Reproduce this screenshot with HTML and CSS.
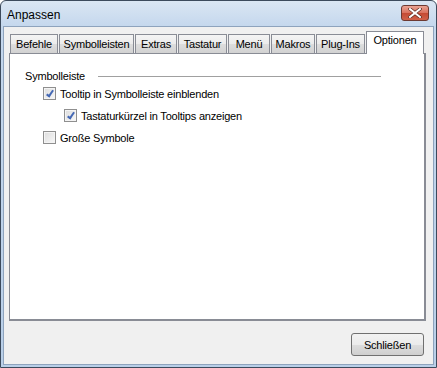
FILE: index.html
```html
<!DOCTYPE html>
<html lang="de">
<head>
    <meta charset="UTF-8">
    <title>Anpassen</title>
    <link rel="stylesheet" href="styles.css">
</head>
<body>

    <!-- Dialog window -->
    <div class="window">
        <div class="title-bar">
            <span class="title">Anpassen</span>
            <button class="close-button" aria-label="Schließen">
                <svg width="14" height="10" viewBox="0 0 14 10">
                    <path d="M2 1 L12 9 M12 1 L2 9" stroke="#5a2a20" stroke-width="3.4" stroke-linecap="square"/>
                    <path d="M2 1 L12 9 M12 1 L2 9" stroke="#ffffff" stroke-width="2" stroke-linecap="square"/>
                </svg>
            </button>
        </div>

        <div class="client">
            <!-- Tabs -->
            <div class="tabs">
                <div class="tab tab-befehle">Befehle</div>
                <div class="tab tab-symbolleisten">Symbolleisten</div>
                <div class="tab tab-extras">Extras</div>
                <div class="tab tab-tastatur">Tastatur</div>
                <div class="tab tab-menu">Menü</div>
                <div class="tab tab-makros">Makros</div>
                <div class="tab tab-plugins">Plug-Ins</div>
                <div class="tab tab-optionen active">Optionen</div>
            </div>

            <div class="tab-panel">
                <div class="group-title">
                    <span>Symbolleiste</span>
                    <div class="group-line"></div>
                </div>

                <label class="check-row first">
                    <span class="checkbox checked"></span>
                    Tooltip in Symbolleiste einblenden
                </label>
                <label class="check-row indent">
                    <span class="checkbox checked"></span>
                    Tastaturkürzel in Tooltips anzeigen
                </label>
                <label class="check-row">
                    <span class="checkbox"></span>
                    Große Symbole
                </label>
            </div>

            <div class="button-bar">
                <button class="push-button">Schließen</button>
            </div>
        </div>
    </div>

</body>
</html>
```

FILE: styles.css
```css
body {
    margin: 0;
    font-family: "Liberation Sans", Arial, sans-serif;
    font-size: 11px;
    letter-spacing: -0.2px;
    color: #000;
    background: #ffffff;
}

.window {
    width: 437px;
    height: 368px;
    box-sizing: border-box;
    border: 1px solid #3c4a5c;
    border-radius: 6px 6px 0 0;
    background: linear-gradient(#dae6f3, #c4d7ed 26px, #b9cfe8);
    display: flex;
    flex-direction: column;
    overflow: hidden;
}

.title-bar {
    height: 25px;
    display: flex;
    align-items: flex-start;
    justify-content: space-between;
    padding: 0 7px 0 6px;
    flex-shrink: 0;
}

.title {
    margin-top: 7px;
    font-size: 12px;
    letter-spacing: 0;
    color: #000;
}

.close-button {
    margin-top: 4px;
    width: 28px;
    height: 16px;
    padding: 0;
    border: 1px solid #6d3a32;
    border-radius: 3px;
    background: linear-gradient(#e9a394, #d9705c 50%, #c44a33 51%, #d0624a);
    display: flex;
    align-items: center;
    justify-content: center;
}

.client {
    flex: 1;
    margin: 0 2px 2px 2px;
    border: 1px solid #8ea3bd;
    background: #f0f0f0;
    display: flex;
    flex-direction: column;
    padding: 0 7px 0 5px;
}

/* Tabs row */
.tabs {
    display: flex;
    align-items: flex-end;
    height: 26px;
    padding-left: 1px;
    gap: 1px;
}

.tab {
    height: 19px;
    box-sizing: border-box;
    padding-top: 3px;
    border: 1px solid #898c95;
    border-bottom: none;
    background: linear-gradient(#f4f4f4, #ebebeb 50%, #dddddd 51%, #d2d2d2);
    text-align: center;
    line-height: 13px;
    flex-shrink: 0;
}

.tab-befehle { width: 48px; }
.tab-symbolleisten { width: 75px; }
.tab-extras { width: 42px; }
.tab-tastatur { width: 49px; }
.tab-menu { width: 42px; }
.tab-makros { width: 44px; }
.tab-plugins { width: 49px; }
.tab-optionen { width: 58px; }

.tab.active {
    height: 23px;
    margin-bottom: -1px;
    background: #ffffff;
    padding-top: 2px;
    position: relative;
}

/* Panel */
.tab-panel {
    height: 268px;
    box-sizing: border-box;
    background: #ffffff;
    border: 1px solid #898c95;
    border-right: 2px solid #898c95;
    border-bottom: 2px solid #898c95;
    padding: 15px 43px 0 15px;
}

.group-title {
    display: flex;
    align-items: center;
    gap: 13px;
    height: 14px;
}

.group-line {
    flex: 1;
    height: 0;
    border-top: 1px solid #a0a0a0;
}

.check-row {
    display: flex;
    align-items: center;
    gap: 4px;
    height: 13px;
    margin-top: 9px;
    margin-left: 18px;
}

.check-row.first {
    margin-top: 4px;
}

.check-row.indent {
    margin-left: 39px;
}

.checkbox {
    width: 11px;
    height: 11px;
    border: 1px solid #8f8f8f;
    background: linear-gradient(135deg, #dcdcdc, #f8f8f8);
    box-shadow: inset 0 0 0 1px #f4f4f4;
    position: relative;
    flex-shrink: 0;
}

.checkbox.checked::after {
    content: "";
    position: absolute;
    left: 4px;
    top: 1px;
    width: 2px;
    height: 6px;
    border-right: 2px solid #4468b4;
    border-bottom: 2px solid #4468b4;
    transform: rotate(35deg);
}

/* Bottom buttons */
.button-bar {
    flex: 1;
    display: flex;
    justify-content: flex-end;
    align-items: flex-start;
    padding-top: 12px;
}

.push-button {
    width: 73px;
    height: 23px;
    border: 1px solid #707070;
    border-radius: 3px;
    background: linear-gradient(#f2f2f2, #ebebeb 50%, #dddddd 51%, #cfcfcf);
    font-family: "Liberation Sans", Arial, sans-serif;
    font-size: 11px;
    letter-spacing: -0.2px;
    padding: 0;
    margin-right: 2px;
}
```
